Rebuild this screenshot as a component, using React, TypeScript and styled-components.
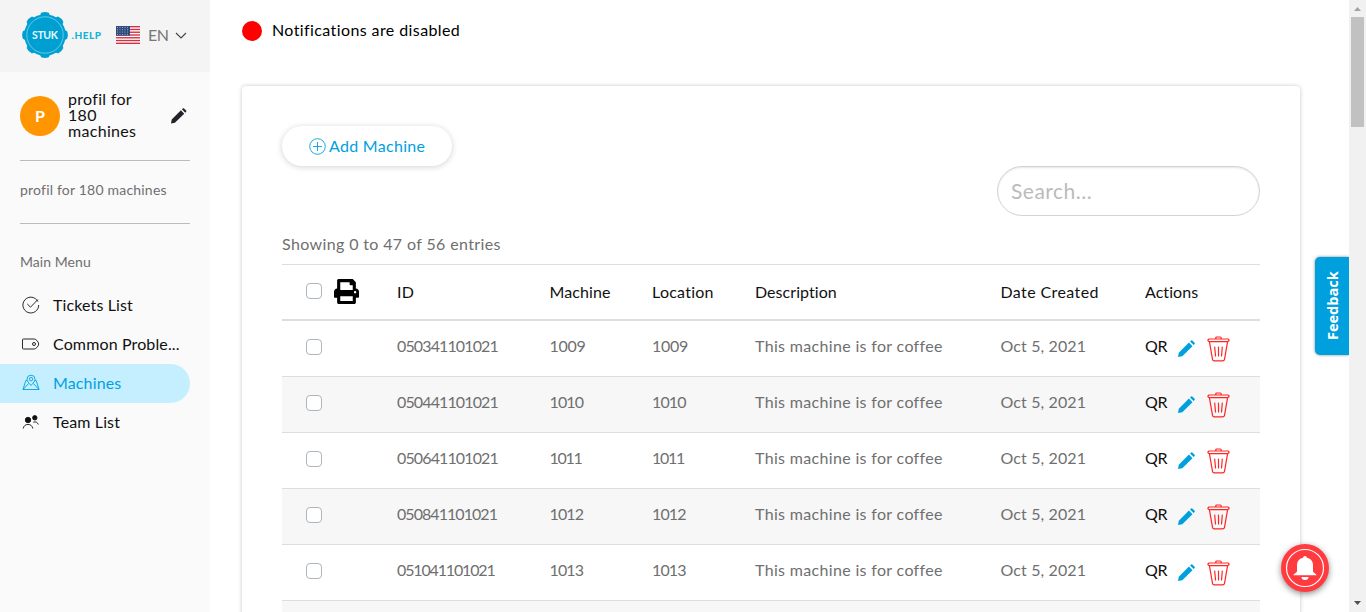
import React from 'react';
import styled, { createGlobalStyle } from 'styled-components';
import { FaPrint } from 'react-icons/fa';

const GlobalStyle = createGlobalStyle`
  * { box-sizing: border-box; }
  body {
    margin: 0;
    overflow: hidden;
    background: #fff;
    color: #212529;
    font: 16px/24px Lato, "Liberation Sans", sans-serif;
  }
`;

const Page = styled.div`
  display: flex;
  height: 612px;
  overflow: hidden;
  position: relative;
`;

const Sidebar = styled.aside`
  width: 210px;
  flex: none;
  background: #fafafa;
`;

const Brand = styled.header`
  display: flex;
  align-items: center;
  height: 72px;
  padding: 0 0 2px 20px;
  background: #f4f4f4;
`;

const Logo = styled.svg`
  width: 84px;
  height: 50px;
  margin-right: 12px;
`;

const Flag = styled.svg`
  width: 24px;
  height: 18px;
  margin-right: 8px;
`;

const Language = styled.span`
  width: 27px;
  color: #777;
  letter-spacing: -0.5px;
`;

const Profile = styled.section`
  display: flex;
  align-items: center;
  height: 89px;
  margin: 0 20px;
  border-bottom: 1px solid #bbb;
`;

const Avatar = styled.div`
  display: grid;
  place-items: center;
  width: 40px;
  height: 40px;
  margin-right: 8px;
  padding-bottom: 1px;
  border-radius: 50%;
  background: #ff9500;
  color: #fff;
  font-weight: 700;
`;

const ProfileName = styled.div`
  width: 103px;
  padding: 0 22px 2px 0;
  color: #111;
  line-height: 16px;
  letter-spacing: 0.3px;
`;

const Company = styled.div`
  height: 63px;
  margin: 0 20px;
  border-bottom: 1px solid #bbb;
  color: #6f6f6f;
  font-size: 14px;
  line-height: 57px;
  letter-spacing: 0.2px;
  white-space: nowrap;
`;

const MenuTitle = styled.h2`
  margin: 26px 20px 12px;
  color: #6f6f6f;
  font-size: 14px;
  font-weight: 400;
  line-height: 24px;
  letter-spacing: 0.05px;
`;

const MenuItem = styled.a<{ $active?: boolean }>`
  display: flex;
  align-items: center;
  gap: 13px;
  width: 190px;
  height: 39px;
  padding: 0 0 1px 22px;
  border-radius: 0 20px 20px 0;
  background: ${p => (p.$active ? '#c5efff' : 'transparent')};
  color: ${p => (p.$active ? '#00a0df' : '#111')};
  letter-spacing: 0.13px;
  white-space: nowrap;

  svg { width: 18px; height: 18px; flex: none; }
`;

const Main = styled.main`
  flex: 1;
  padding: 19px 49px 0 32px;
`;

const Notice = styled.div`
  display: flex;
  align-items: center;
  gap: 10px;
  height: 24px;
  color: #000;
  letter-spacing: 0.4px;
`;

const NoticeText = styled.span`
  padding-bottom: 2px;
`;

const Dot = styled.span`
  width: 20px;
  height: 20px;
  border-radius: 50%;
  background: #f00;
`;

const Card = styled.section`
  height: 620px;
  margin-top: 43px;
  padding: 40px 40px 0;
  border-radius: 4px;
  background: #fff;
  box-shadow: 0 0 4px rgba(0, 0, 0, 0.22);
`;

const AddButton = styled.button`
  display: flex;
  align-items: center;
  gap: 3px;
  width: 170px;
  height: 40px;
  padding: 0 0 1px 27px;
  border: 0;
  border-radius: 20px;
  background: #fff;
  box-shadow: 0 1px 6px rgba(0, 0, 0, 0.18);
  color: #00a0df;
  font: inherit;
  letter-spacing: 0.3px;

  svg { margin-top: 2px; }
`;

const Search = styled.input`
  display: block;
  width: 263px;
  height: 50px;
  margin-left: auto;
  padding: 0 13px 2px;
  border: 1px solid #ced4da;
  border-radius: 25px;
  box-shadow: inset 0 1px 2px rgba(0, 0, 0, 0.1);
  font: 21px Lato, sans-serif;
  letter-spacing: 0.5px;

  &::placeholder { color: #bbb; opacity: 1; }
`;

const Summary = styled.div`
  height: 48px;
  padding-top: 16px;
  color: #6f6f6f;
  letter-spacing: 0.37px;
`;

const Row = styled.div<{ $head?: boolean; $striped?: boolean }>`
  display: grid;
  grid-template-columns: 91px 152.5px 102.5px 103px 245.5px 144.5px 1fr;
  align-items: center;
  height: 56px;
  padding: 0 0 ${p => (p.$head ? 2 : 5)}px 24px;
  border-top: 1px solid #dcdddf;
  background: ${p => (p.$striped ? '#f7f7f7' : '#fff')};
  box-shadow: ${p => (p.$head ? 'inset 0 -1px #dcdddf' : 'none')};
  color: ${p => (p.$head ? '#111' : '#6f6f6f')};
  white-space: nowrap;
`;

const Cell = styled.span<{ $spacing?: number }>`
  letter-spacing: ${p => p.$spacing ?? 0.33}px;
`;

const CheckCell = styled.div<{ $head?: boolean }>`
  display: flex;
  align-items: center;
  gap: 12px;
  padding-top: ${p => (p.$head ? 0 : 2)}px;
  color: #000;
`;

const Checkbox = styled.span<{ $head?: boolean }>`
  width: 16px;
  height: 16px;
  margin-bottom: ${p => (p.$head ? 2 : 0)}px;
  border: 1px solid #adb5bd;
  border-radius: 4px;
  background: #fff;
`;

const Actions = styled.div`
  display: flex;
  align-items: center;
  color: #111;
  letter-spacing: -0.4px;
`;

const Pencil = styled.svg<{ $size: number }>`
  width: ${p => p.$size}px;
  height: ${p => p.$size}px;
  fill: currentColor;
`;

const EditAction = styled.span`
  display: flex;
  margin: 5px 12px 0 11px;
  color: #00a0df;
`;

const Trash = styled.svg`
  width: 23px;
  height: 26px;
  margin-top: 5px;
`;

const Scrollbar = styled.div`
  display: flex;
  flex-direction: column;
  align-items: center;
  justify-content: space-between;
  width: 17px;
  padding: 7px 0 7px;
  background: #f1f1f1;
`;

const Thumb = styled.div`
  width: 13px;
  height: 110px;
  margin: 6px 0 auto;
  background: #c1c1c1;
`;

const Feedback = styled.button`
  position: absolute;
  top: 257px;
  right: 17px;
  width: 34px;
  height: 98px;
  padding: 0;
  border: 0;
  border-radius: 5px 0 0 5px;
  background: #00a0df;
  box-shadow: 0 0 3px rgba(0, 0, 0, 0.5);
  clip-path: inset(-4px 0 -4px -4px);
  color: #fff;
  font: 700 14.5px "Open Sans", sans-serif;
  writing-mode: vertical-rl;

  span { display: block; transform: rotate(180deg); }
`;

const Bell = styled.button`
  position: absolute;
  top: 544px;
  right: 37px;
  width: 48px;
  height: 48px;
  padding: 0;
  border: 0;
  border-radius: 50%;
  background: #ff3b40;
  box-shadow: 0 2px 6px rgba(0, 0, 0, 0.45);
`;

const teeth = [0, 45, 90, 135, 180, 225, 270, 315];

const BrandLogo = () => (
  <Logo viewBox="0 0 84 50">
    <g fill="#009fd1">
      {teeth.map(a => (
        <path key={a} d="M19.800 6 21.200 2.800Q25 1.300 28.800 2.800L30.200 6Z" transform={`rotate(${a} 25 25)`} />
      ))}
      <circle cx="25" cy="25" r="20.800" />
    </g>
    <circle cx="25" cy="25" r="18.200" fill="none" stroke="#7ed3ec" strokeWidth=".8" />
    <g fontFamily="Lato">
      <text x="12" y="29" fontSize="10.500" fontWeight="700" fill="#e6f8fd" textLength="26">STUK</text>
      <text x="51.500" y="29" fontSize="10" fontWeight="900" fill="#13b4d8" textLength="29.500">.HELP</text>
    </g>
  </Logo>
);

const UsFlag = () => (
  <Flag viewBox="0 0 24 18">
    <path fill="#fff" d="M0 0h24v18H0z" />
    {[0, 1, 2, 3, 4, 5, 6].map(i => (
      <path key={i} fill="#d22f3f" d={`M0 ${i * 2.77}h24v1.380H0z`} />
    ))}
    <path fill="#2f4a7d" d="M0 0h14v9.700H0z" />
    {[1.5, 4, 6.5, 9, 11.5].map(x =>
      [1.5, 3.8, 6.1, 8.4].map(y => <circle key={`${x}-${y}`} cx={x} cy={y} r=".5" fill="#b9c4da" />)
    )}
  </Flag>
);

const line = { fill: 'none', stroke: 'currentColor', strokeWidth: 0.9 };

const TicketIcon = () => (
  <svg viewBox="0 0 18 18" {...line}>
    <path d="M15.900 5.600A7.900 7.900 0 1 0 16.700 9M5.300 8l3.200 3.200L15.800 3.600" />
  </svg>
);
const TagIcon = () => (
  <svg viewBox="0 0 18 18" {...line}>
    <path d="M1.500 4h10.800c1.800 0 4.400 3.200 4.400 5s-2.600 5-4.400 5H1.500a1 1 0 0 1-1-1V5a1 1 0 0 1 1-1Z" />
    <circle cx="12" cy="9" r="1.500" />
  </svg>
);
const MapIcon = () => (
  <svg viewBox="0 0 18 18" {...line}>
    <path d="M5.200 6.500H3.800L1 15.500h16L14.200 6.500h-1.400M9 11.500C6.500 8.700 5 7 5 5.200a4 4 0 0 1 8 0c0 1.800-1.500 3.500-4 6.300ZM1 15.500l5.600-6M17 15.500l-5.600-6" />
    <circle cx="9" cy="5.200" r="1.700" />
  </svg>
);
const TeamIcon = () => (
  <svg viewBox="0 0 18 18" {...line}>
    <circle cx="6" cy="7" r="2.700" fill="currentColor" />
    <circle cx="12.800" cy="4.800" r="2.200" fill="currentColor" />
    <path d="M1.200 15.500c.6-2.700 2.300-4.100 4.800-4.100s4.200 1.400 4.800 4.100M11.300 9.200c2.600-.8 4.300.2 5 2.300" />
  </svg>
);

const PencilIcon = ({ size }: { size: number }) => (
  <Pencil viewBox="0 0 17 17" $size={size}>
    <path d="M0 17 .8 12.700 10.900 2.600 14.500 6.200 4.300 16.200ZM12 1.500 13.100.4Q13.700-.1 14.300.5L16.600 2.800Q17.200 3.400 16.600 4L15.600 5.100Z" />
  </Pencil>
);

const TrashIcon = () => (
  <Trash viewBox="0 0 23 26" fill="none" stroke="#ff2424" strokeWidth="1.200" strokeLinejoin="round" strokeLinecap="round">
    <path d="M8.800 3V2q0-1 1-1h3.400q1 0 1 1v1M2 3h19q2.200 1.300 0 2.600H2Q-.2 4.300 2 3ZM2.400 5.600 5.500 23.300Q5.800 24.900 7.400 24.900h8.200q1.600 0 1.900-1.600L20.600 5.600M7.700 11l.8 9M11.500 11v9M15.300 11l-.8 9" />
  </Trash>
);

const menu = [
  { label: 'Tickets List', icon: <TicketIcon /> },
  { label: 'Common Proble...', icon: <TagIcon /> },
  { label: 'Machines', icon: <MapIcon />, active: true },
  { label: 'Team List', icon: <TeamIcon /> },
];

const machines = [
  ['050341101021', '1009', -0.87],
  ['050441101021', '1010', -0.87],
  ['050641101021', '1011', -0.87],
  ['050841101021', '1012', -0.95],
  ['051041101021', '1013', -1.15],
] as const;

const numberSpacing: Record<string, number> = {
  '1009': -0.5,
  '1010': -1.7,
  '1011': -2.6,
  '1012': -1.7,
  '1013': -1.7,
};

export default function App() {
  return (
    <Page>
      <GlobalStyle />
      <Sidebar>
        <Brand>
          <BrandLogo />
          <UsFlag />
          <Language>EN</Language>
          <svg width="12" height="8" viewBox="0 0 12 8" fill="none" stroke="#444" strokeWidth="1.100"><path d="m1 2 5 5 5-5" /></svg>
        </Brand>
        <Profile>
          <Avatar>P</Avatar>
          <ProfileName>profil for 180 machines</ProfileName>
          <PencilIcon size={15.5} />
        </Profile>
        <Company>profil for 180 machines</Company>
        <MenuTitle>Main Menu</MenuTitle>
        <nav>
          {menu.map(m => (
            <MenuItem key={m.label} $active={m.active}>{m.icon}{m.label}</MenuItem>
          ))}
        </nav>
      </Sidebar>
      <Main>
        <Notice><Dot /><NoticeText>Notifications are disabled</NoticeText></Notice>
        <Card>
          <AddButton>
            <svg width="17" height="17" viewBox="0 0 17 17" {...line}><circle cx="8.500" cy="8.500" r="7.800" /><path d="M8.500 4v9M4 8.500h9" /></svg>
            Add Machine
          </AddButton>
          <Search placeholder="Search..." />
          <Summary>Showing 0 to 47 of 56 entries</Summary>
          <Row $head>
            <CheckCell $head><Checkbox $head /><FaPrint size={25} /></CheckCell>
            <Cell>ID</Cell>
            <Cell $spacing={0.1}>Machine</Cell>
            <Cell $spacing={0.25}>Location</Cell>
            <Cell $spacing={0.05}>Description</Cell>
            <Cell $spacing={0.4}>Date Created</Cell>
            <Cell $spacing={0.05}>Actions</Cell>
          </Row>
          {machines.map(([id, number, spacing], i) => (
            <Row key={id} $striped={i % 2 === 1}>
              <CheckCell><Checkbox /></CheckCell>
              <Cell $spacing={spacing}>{id}</Cell>
              <Cell $spacing={numberSpacing[number] / 2}>{number}</Cell>
              <Cell $spacing={numberSpacing[number] / 2}>{number}</Cell>
              <Cell>This machine is for coffee</Cell>
              <Cell $spacing={0.12}>Oct 5, 2021</Cell>
              <Actions>QR<EditAction><PencilIcon size={17} /></EditAction><TrashIcon /></Actions>
            </Row>
          ))}
          <Row $striped />
        </Card>
      </Main>
      <Scrollbar>
        <svg width="7" height="4"><path d="M0 4 3.500 0 7 4Z" fill="#a3a3a3" /></svg>
        <Thumb />
        <svg width="7" height="4"><path d="M0 0h7L3.500 4Z" fill="#505050" /></svg>
      </Scrollbar>
      <Feedback><span>Feedback</span></Feedback>
      <Bell>
        <svg width="48" height="48" viewBox="0 0 48 48">
          <circle cx="24" cy="24" r="18.500" fill="none" stroke="#fff" strokeWidth="1.200" />
          <path fill="#fff" d="M24 12a2 2 0 0 1 2 1.700c4 .9 6 4 6 7.300v6c0 2 3.500 2.500 3.500 4.300h-23c0-1.800 3.500-2.300 3.500-4.300v-6c0-3.300 2-6.400 6-7.300A2 2 0 0 1 24 12ZM20.500 33h7a3.500 3 0 0 1-7 0Z" />
        </svg>
      </Bell>
    </Page>
  );
}
